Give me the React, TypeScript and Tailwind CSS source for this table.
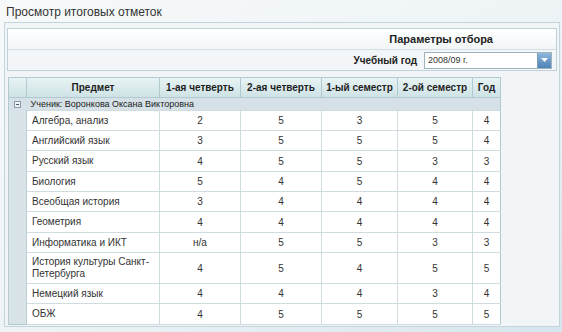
const rows: { name: string; v: string[]; h: number }[] = [
  { name: "Алгебра, анализ", v: ["2", "5", "3", "5", "4"], h: 20 },
  { name: "Английский язык", v: ["3", "5", "5", "5", "4"], h: 20 },
  { name: "Русский язык", v: ["4", "5", "5", "3", "3"], h: 21 },
  { name: "Биология", v: ["5", "4", "5", "4", "4"], h: 20 },
  { name: "Всеобщая история", v: ["3", "4", "4", "4", "4"], h: 20 },
  { name: "Геометрия", v: ["4", "4", "4", "4", "4"], h: 21 },
  { name: "Информатика и ИКТ", v: ["н/а", "5", "5", "3", "3"], h: 20 },
  { name: "История культуры Санкт-Петербурга", v: ["4", "5", "4", "5", "5"], h: 31 },
  { name: "Немецкий язык", v: ["4", "4", "4", "3", "4"], h: 20 },
  { name: "ОБЖ", v: ["4", "5", "5", "5", "5"], h: 21 },
];

const heads = ["1-ая четверть", "2-ая четверть", "1-ый семестр", "2-ой семестр", "Год"];
const widths = ["w-[81px]", "w-[81px]", "w-[76px]", "w-[75px]", "w-[28px]"];

export default function App() {
  return (
    <div
      className="w-[562px] h-[332px] overflow-hidden bg-gradient-to-br from-[#f7f9fa] via-[#eef4f6] to-[#d6e6ee] text-[#2b2b2b]"
      style={{ fontFamily: '"Liberation Sans", Arial, sans-serif' }}
    >
      <div className="h-[22px] pl-[6px] pt-[5px] text-[12px] leading-[14px] text-[#333]">
        Просмотр итоговых отметок
      </div>

      <div className="ml-[4px] mr-[2px] h-[305px] border border-[#c3d4da] bg-[#f1f5f7] pl-[3px] pr-[2px] pt-[5px]">
        <div className="ml-[-1px] border border-[#c0d1d7] bg-white">
          <div className="flex h-[21px] items-center justify-end border-b border-[#d3dfe3] bg-gradient-to-b from-white to-[#f2f6f8] pr-[63px] text-[11px] font-bold text-[#222]">
            Параметры отбора
          </div>
          <div className="flex h-[20px] items-center justify-end gap-[7px] bg-[#f3f6f8] pr-[4px]">
            <span className="text-[10px] font-bold text-[#222]">Учебный год</span>
            <div className="flex h-[17px] w-[128px] items-stretch border border-[#9fb4bd] bg-white">
              <span className="flex-1 pl-[3px] text-[9px] leading-[15px] text-[#333]">2008/09 г.</span>
              <span className="flex w-[14px] items-center justify-center border-l border-[#7d9cb6] bg-gradient-to-b from-[#8db7de] to-[#4f82b6]">
                <svg width="7" height="4" viewBox="0 0 7 4">
                  <path d="M0 0h7L3.5 4z" fill="#fff" />
                </svg>
              </span>
            </div>
          </div>
        </div>

        <table className="mt-[6px] table-fixed border-collapse text-[10px] text-[#333]">
          <thead>
            <tr className="h-[20px] bg-gradient-to-b from-[#e8f3f4] to-[#cde2e5] text-[10px] font-bold text-[#1e1e1e]">
              <th className="w-[18px] border border-[#b0cacf]"></th>
              <th className="w-[133px] border border-[#b0cacf] font-bold">Предмет</th>
              {heads.map((h, i) => (
                <th key={h} className={`${widths[i]} whitespace-nowrap border border-[#b0cacf] px-0 font-bold`}>
                  {h}
                </th>
              ))}
            </tr>
          </thead>
          <tbody>
            <tr className="h-[13px] bg-[#d5e1e6]">
              <td className="border-l border-[#b0cacf] text-center align-middle">
                <span className="mx-auto flex h-[7px] w-[7px] items-center justify-center border border-[#8a9da6] bg-[#eef2f4]">
                  <span className="h-px w-[3px] bg-[#4b5a61]" />
                </span>
              </td>
              <td colSpan={6} className="border-r border-[#b0cacf] pl-[4px] text-[9px] leading-[12px] text-[#222]">
                Ученик: Воронкова Оксана Викторовна
              </td>
            </tr>
            {rows.map((r) => (
              <tr key={r.name} style={{ height: r.h }} className="bg-white">
                <td className="border-x border-[#b8ccd2] bg-[#d9e4e9]"></td>
                <td className="border border-[#cfdde1] pl-[5px] pr-0 leading-[12px]">{r.name}</td>
                {r.v.map((v, i) => (
                  <td
                    key={i}
                    className={`border border-[#cfdde1] text-center ${i === 4 ? "border-l-[#b8ccd2] border-r-[#b0cacf]" : ""}`}
                  >
                    {v}
                  </td>
                ))}
              </tr>
            ))}
            <tr className="h-0">
              <td colSpan={7} className="border-t border-[#b0cacf]"></td>
            </tr>
          </tbody>
        </table>
      </div>
    </div>
  );
}
